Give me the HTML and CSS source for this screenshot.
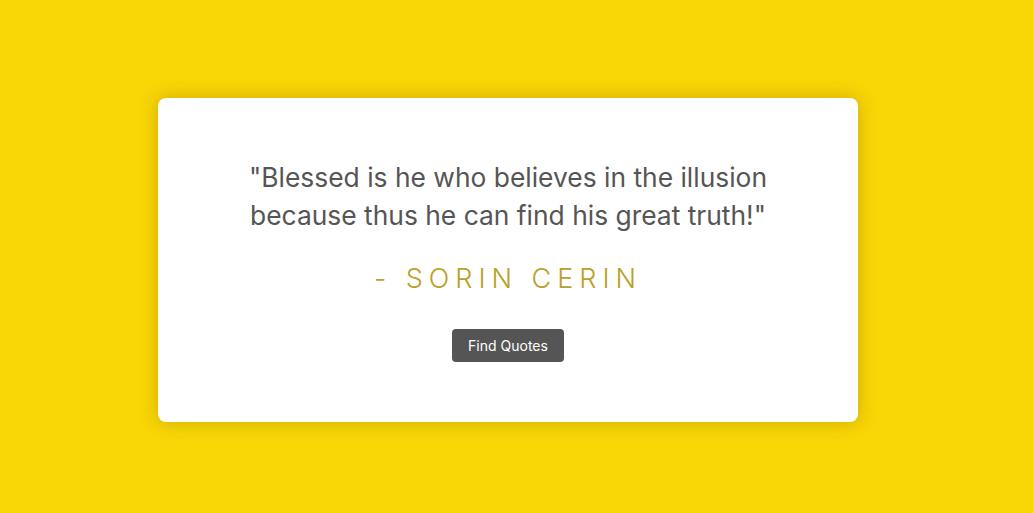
FILE: index.html
```html
<!DOCTYPE html>
<html lang="en">
<head>
<meta charset="utf-8">
<title>Quotes</title>
<link rel="stylesheet" href="styles.css">
</head>
<body>
<main class="page">
  <section class="card">
    <p class="quote">"Blessed is he who believes in the illusion because thus he can find his great truth!"</p>
    <p class="author">- Sorin Cerin</p>
    <button class="btn" type="button">Find Quotes</button>
  </section>
</main>
</body>
</html>
```
FILE: styles.css
```css
* { box-sizing: border-box; }
html, body { margin: 0; height: 100%; }
body {
  background: #f9d606;
  font-family: "Inter", "Open Sans", sans-serif;
}
.page {
  height: 100%;
  display: flex;
  align-items: center;
  justify-content: center;
  padding: 7px 17px 0 0;
}
.card {
  width: 700px;
  height: 324px;
  background: #fff;
  border-radius: 8px;
  box-shadow: 0 0 18px rgba(150, 120, 0, 0.45);
  display: flex;
  flex-direction: column;
  align-items: center;
  padding: 60px 60px 0;
  text-align: center;
}
.quote {
  margin: 0;
  font-size: 26.4px;
  line-height: 38px;
  color: #555;
  max-width: 580px;
}
.author {
  margin: 28px 0 0;
  font-size: 27px;
  font-weight: 300;
  letter-spacing: 6px;
  text-transform: uppercase;
  color: #b9a12a;
}
.btn {
  margin-top: 34px;
  background: #555;
  color: #fff;
  border: 0;
  border-radius: 4px;
  font-family: inherit;
  font-size: 14px;
  width: 112px;
  height: 33px;
  padding: 0;
}
```
